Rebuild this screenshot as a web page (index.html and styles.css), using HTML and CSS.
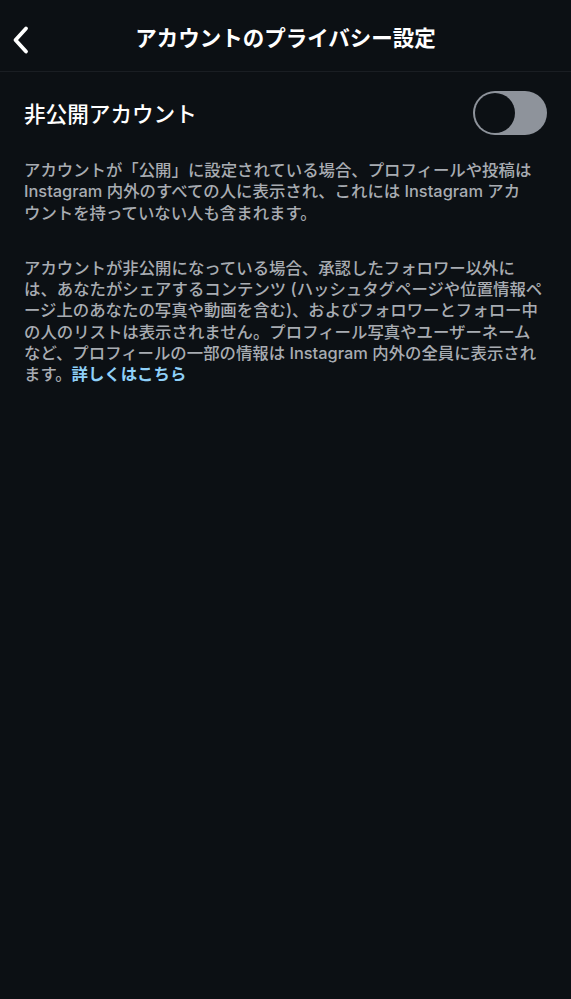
FILE: index.html
```html
<!DOCTYPE html>
<html lang="ja">
<head>
  <meta charset="UTF-8">
  <meta name="viewport" content="width=device-width, initial-scale=1.0">
  <title>アカウントのプライバシー設定</title>
  <link rel="stylesheet" href="styles.css">
</head>
<body>
  <!-- Header -->
  <div class="header">
    <a class="back" href="#">
      <svg width="22" height="30" viewBox="0 0 22 30">
        <path d="M16 3.5 L5.5 15 L16 26.5" fill="none" stroke="#fff" stroke-width="3.8" stroke-linecap="round" stroke-linejoin="round"/>
      </svg>
    </a>
    <h1>アカウントのプライバシー設定</h1>
  </div>

  <!-- Private account -->
  <div class="content">
    <div class="row">
      <span class="label">非公開アカウント</span>
      <div class="toggle"><div class="knob"></div></div>
    </div>

    <p class="desc">アカウントが「公開」に設定されている場合、プロフィールや投稿は<br>Instagram 内外のすべての人に表示され、これには Instagram アカ<br>ウントを持っていない人も含まれます。</p>

    <p class="desc">アカウントが非公開になっている場合、承認したフォロワー以外に<br>は、あなたがシェアするコンテンツ (ハッシュタグページや位置情報ペ<br>ージ上のあなたの写真や動画を含む)、およびフォロワーとフォロー中<br>の人のリストは表示されません。プロフィール写真やユーザーネーム<br>など、プロフィールの一部の情報は Instagram 内外の全員に表示され<br>ます。<a href="#">詳しくはこちら</a></p>
  </div>
</body>
</html>
```

FILE: styles.css
```css
body {
  margin: 0;
  background-color: #0c1014;
  color: #fff;
  font-family: 'Inter', 'Noto Sans CJK JP', sans-serif;
}

/* Header */
.header {
  position: relative;
  height: 71px;
  border-bottom: 1px solid #1a1e23;
  display: flex;
  align-items: center;
  justify-content: center;
}

.header h1 {
  margin: 2px 0 0;
  font-size: 21.5px;
  font-weight: 700;
}

.back {
  position: absolute;
  left: 10px;
  top: 25px;
  display: block;
}

.back svg {
  display: block;
}

/* Content */
.content {
  padding: 0 24px;
}

.row {
  display: flex;
  align-items: center;
  justify-content: space-between;
  padding-top: 18px;
  height: 45px;
}

.label {
  font-size: 21.6px;
  font-weight: 500;
}

.toggle {
  width: 74px;
  height: 44px;
  border-radius: 22px;
  background-color: #8e939b;
  padding: 2px;
  box-sizing: border-box;
}

.knob {
  width: 40px;
  height: 40px;
  border-radius: 50%;
  background-color: #0c1014;
}

.desc {
  margin: 25px 0 0;
  font-size: 16.4px;
  font-weight: 500;
  line-height: 21.3px;
  color: #a8acb2;
  white-space: nowrap;
}

.desc + .desc {
  margin-top: 34px;
}

.desc a {
  color: #8fd0f8;
  text-decoration: none;
  font-weight: 600;
}
```
